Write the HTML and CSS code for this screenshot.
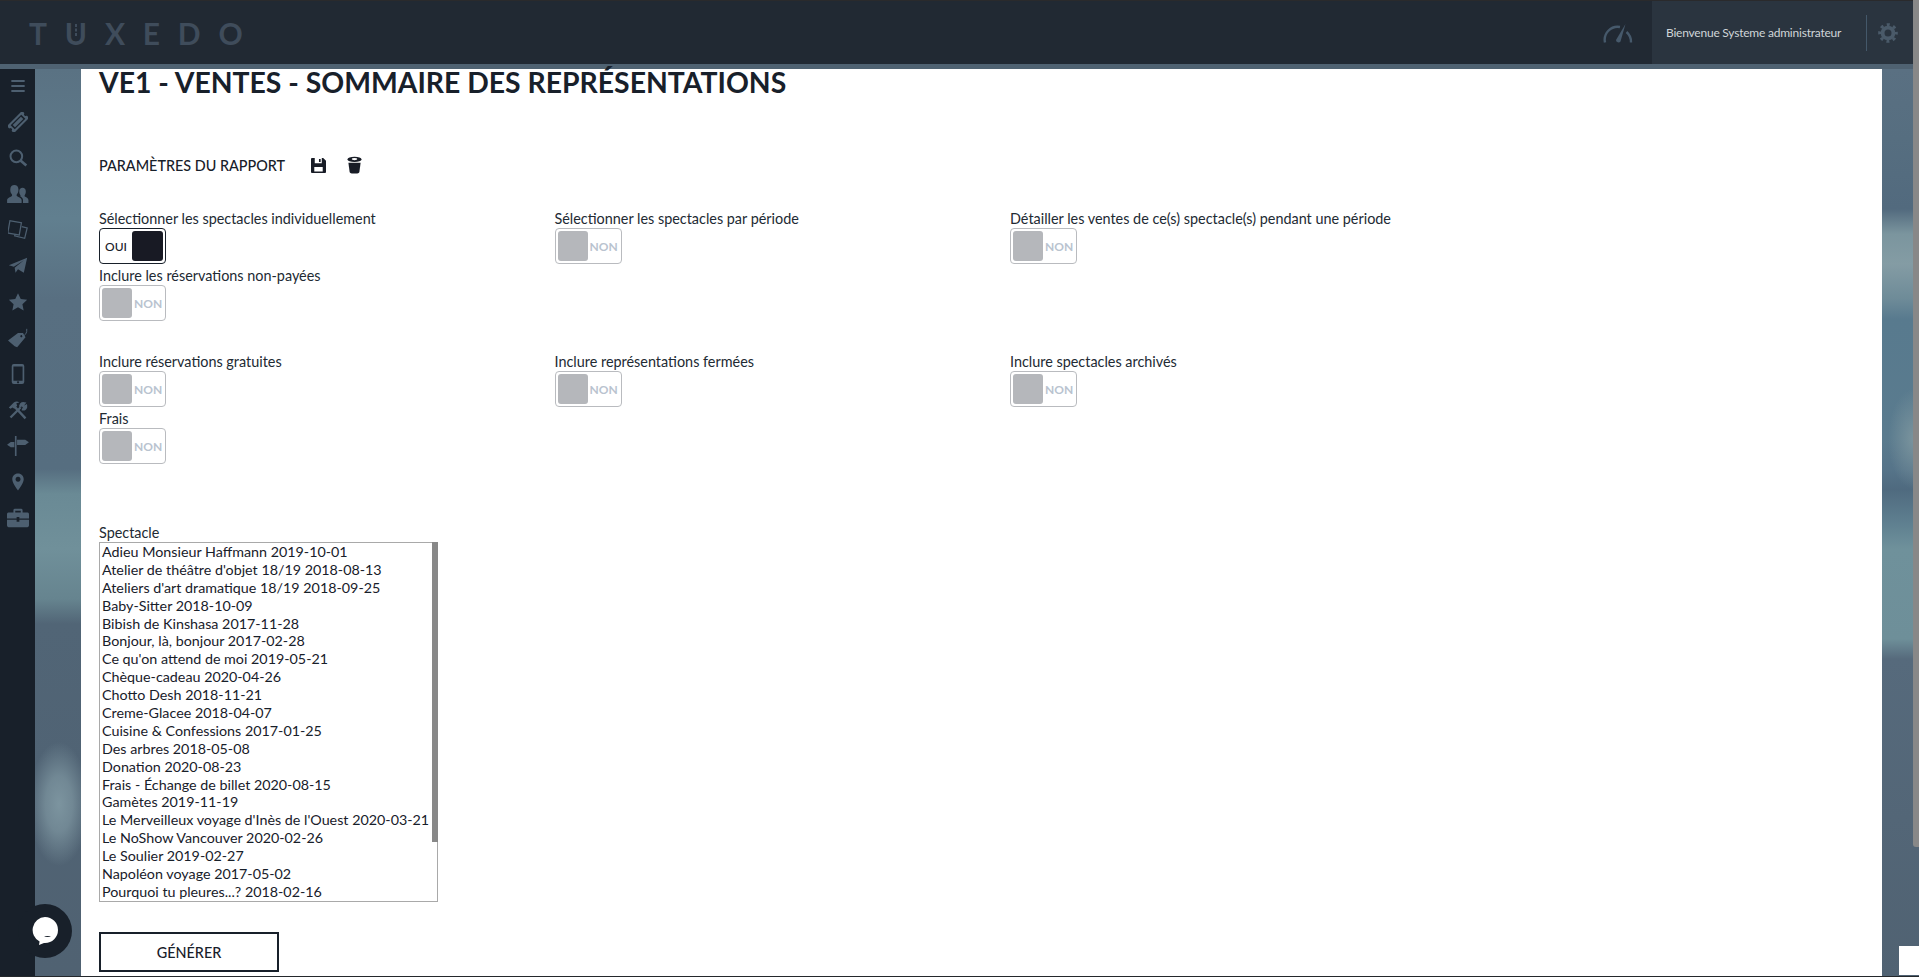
FILE: index.html
```html
<!DOCTYPE html>
<html lang="fr">
<head>
<meta charset="utf-8">
<title>Tuxedo - VE1</title>
<link rel="stylesheet" href="styles.css">
</head>
<body>
<div class="page">
  <header class="topbar">
    <div class="logo">T<span class="logo-u">U</span>XEDO</div>
    <div class="top-right">
      <svg class="gauge" viewBox="0 0 30 20" width="30" height="20"><path d="M2 19.500A13 13 0 0 1 17 4" fill="none" stroke="currentColor" stroke-width="2.400"/><path d="M23.500 9A13 13 0 0 1 28 19.500" fill="none" stroke="currentColor" stroke-width="2.400"/><path d="M22.500 1 L17.500 18.500 A2.500 2.500 0 0 1 13 17 Z" fill="currentColor"/></svg>
      <div class="welcome">
        <span class="welcome-text">Bienvenue Systeme administrateur</span>
        <span class="welcome-sep"></span>
        <svg class="gear" viewBox="0 0 24 24" width="20" height="20"><circle cx="12" cy="12" r="6.500" fill="none" stroke="currentColor" stroke-width="4.600"/><circle cx="12" cy="12" r="10" fill="none" stroke="currentColor" stroke-width="3.600" stroke-dasharray="3.600 4.250" stroke-dashoffset="1.800"/></svg>
      </div>
    </div>
  </header>
  <div class="strip"></div>
  <div class="main">
    <nav class="sidebar">
      <svg class="nav-icon" viewBox="0 0 24 24"><path d="M4 6h16M4 12h16M4 18h16" stroke="currentColor" stroke-width="2.200" fill="none"/></svg>
      <svg class="nav-icon" viewBox="0 0 24 24"><g transform="rotate(-45 12 12)"><path fill-rule="evenodd" fill="currentColor" d="M-1 6h26v4a2 2 0 0 0 0 4v4H-1v-4a2 2 0 0 0 0-4zM3 8.500v7h18v-7z"/><rect x="5" y="10" width="14" height="4" fill="currentColor"/></g></svg>
      <svg class="nav-icon" viewBox="0 0 24 24"><circle cx="10" cy="10" r="7" fill="none" stroke="currentColor" stroke-width="2.400"/><path d="M15 15l7 6" stroke="currentColor" stroke-width="3.200"/></svg>
      <svg class="nav-icon nav-wide" viewBox="0 0 24 22"><path fill="currentColor" d="M0 21v-3c0-2.500 3.500-3.500 5-4.500.8-.6.6-1.600 0-2.400C3.800 9.600 3.500 8 3.500 6 3.500 2.500 5.500 1 8 1s4.500 1.500 4.500 5c0 2-.3 3.600-1.500 5.100-.6.800-.8 1.800 0 2.400 1.500 1 5 2 5 4.500v3z"/><path fill="currentColor" d="M17.500 21v-3.500c0-1.800-1.500-3-3-3.800.5-.4.500-1 0-1.700-.9-1.100-1.100-2.500-1.100-4 0-2.700 1.500-4 3.600-4s3.600 1.300 3.600 4c0 1.500-.2 2.900-1.100 4-.5.700-.5 1.300 0 1.700 1.200.8 4 1.600 4 3.800V21z"/></svg>
      <svg class="nav-icon" viewBox="0 0 24 24"><rect x="1" y="2" width="14" height="15" transform="rotate(10 8 9)" fill="none" stroke="currentColor" stroke-width="1.500"/><path d="M16.500 8l6.500 1.500-3 12.500L8 19l.7-2" fill="none" stroke="currentColor" stroke-width="1.500"/></svg>
      <svg class="nav-icon" viewBox="0 0 24 24"><path fill="currentColor" d="M1 11L23 2l-4 18-7-4-3 4-1-6 11-9-12 8z"/></svg>
      <svg class="nav-icon" viewBox="0 0 24 24"><path fill="currentColor" d="M12 1.500l3.300 7 7.700.9-5.700 5.200 1.500 7.600L12 18.400l-6.800 3.800 1.500-7.600L1 9.400l7.700-.9z"/></svg>
      <svg class="nav-icon" viewBox="0 0 24 24"><path fill="currentColor" d="M0 15L12 6l6 0 3 5-10 12-3-1z M16 8.500a1.300 1.300 0 1 0 .1 0z" fill-rule="evenodd"/><path d="M17 9.500C21 9 23 6 22.500 1" fill="none" stroke="currentColor" stroke-width="1.200"/></svg>
      <svg class="nav-icon" viewBox="0 0 24 24"><path fill="currentColor" fill-rule="evenodd" d="M7 0h10a2.500 2.500 0 0 1 2.500 2.500v19A2.500 2.500 0 0 1 17 24H7a2.500 2.500 0 0 1-2.500-2.500v-19A2.500 2.500 0 0 1 7 0zM6.500 3v17h11V3zM12 20.800a1.200 1.200 0 1 0 .1 0z"/></svg>
      <svg class="nav-icon" viewBox="0 0 24 24"><path d="M7 7l14 15" stroke="currentColor" stroke-width="2.800"/><path fill="currentColor" d="M1 9l6-6c2-1.500 5-1.500 6.500 0l-3.500 1 1 3-3.500 3.500-2-1.500L3 10.500z"/><path d="M3 21l12-12" stroke="currentColor" stroke-width="2.800"/><path fill="none" stroke="currentColor" stroke-width="2.800" d="M15 9c-1-3 1-5.500 4.500-5l-2 2.500 1.500 2 2.700-1.500c.5 3-2 5-5 4"/></svg>
      <svg class="nav-icon nav-wide" viewBox="0 0 24 22"><path d="M9.500 0v22" stroke="currentColor" stroke-width="1.800"/><path fill="currentColor" d="M11 4h9l4 3-4 3h-9z"/><path fill="currentColor" d="M8 6.500H4l-4 3 4 3h4z"/></svg>
      <svg class="nav-icon" viewBox="-2 -2 28 28"><path fill="currentColor" fill-rule="evenodd" d="M12 0c4.800 0 8 3.500 8 8 0 5-5 11-8 16-3-5-8-11-8-16 0-4.500 3.200-8 8-8zm0 4.500a3.500 3.500 0 1 0 .1 0z"/></svg>
      <svg class="nav-icon nav-wide" viewBox="0 2 24 20"><path fill="currentColor" fill-rule="evenodd" d="M1.500 6H7V3.500C7 2.500 8 2 9 2h6c1 0 2 .5 2 1.500V6h5.500C23.500 6 24 7 24 8v4.500H13.500V11h-3v1.500H0V8c0-1 .5-2 1.500-2zM9 6h6V4H9z"/><path fill="currentColor" d="M0 14h10.500v2h3v-2H24v6c0 1-.7 2-1.800 2H1.800C.7 22 0 21 0 20z"/></svg>
    </nav>
    <div class="gutter"></div>
    <main class="content">
      <h1 class="title">VE1 - VENTES - SOMMAIRE DES REPRÉSENTATIONS</h1>
      <div class="params">
        <span class="params-title">PARAMÈTRES DU RAPPORT</span>
        <svg class="param-icon" viewBox="0 0 16 16" width="15" height="15"><path fill="#181c26" fill-rule="evenodd" d="M1 0h12l3 3v12a1 1 0 0 1-1 1H1a1 1 0 0 1-1-1V1a1 1 0 0 1 1-1zM4 0v5.500h7.500V0zM8.500 1h1.800v3.300H8.500zM3.500 9.500v4.800h9V9.500z"/></svg>
        <svg class="param-icon" viewBox="0 0 16 18" width="15" height="18"><ellipse cx="8" cy="3" rx="7.500" ry="2.700" fill="#181c26"/><ellipse cx="8" cy="2.700" rx="3" ry="1.100" fill="#fff"/><path fill="#181c26" d="M1.500 6.500h13l-1.300 10c-.2 1-1.200 1.500-2.200 1.500H5c-1 0-2-.5-2.200-1.500z"/></svg>
      </div>
      <div class="field-grid field-grid-first">
        <div class="field"><label class="field-label">Sélectionner les spectacles individuellement</label><div class="toggle toggle-on"><span class="toggle-text">OUI</span><span class="knob"></span></div></div>
        <div class="field"><label class="field-label">Sélectionner les spectacles par période</label><div class="toggle"><span class="knob"></span><span class="toggle-text">NON</span></div></div>
        <div class="field"><label class="field-label">Détailler les ventes de ce(s) spectacle(s) pendant une période</label><div class="toggle"><span class="knob"></span><span class="toggle-text">NON</span></div></div>
      </div>
      <div class="field-grid">
        <div class="field"><label class="field-label">Inclure les réservations non-payées</label><div class="toggle"><span class="knob"></span><span class="toggle-text">NON</span></div></div>
      </div>
      <div class="field-grid field-grid-gap">
        <div class="field"><label class="field-label">Inclure réservations gratuites</label><div class="toggle"><span class="knob"></span><span class="toggle-text">NON</span></div></div>
        <div class="field"><label class="field-label">Inclure représentations fermées</label><div class="toggle"><span class="knob"></span><span class="toggle-text">NON</span></div></div>
        <div class="field"><label class="field-label">Inclure spectacles archivés</label><div class="toggle"><span class="knob"></span><span class="toggle-text">NON</span></div></div>
      </div>
      <div class="field-grid">
        <div class="field"><label class="field-label">Frais</label><div class="toggle"><span class="knob"></span><span class="toggle-text">NON</span></div></div>
      </div>
      <div class="select-field">
        <label class="field-label" for="shows">Spectacle</label>
        <div class="show-list-wrap">
          <select id="shows" class="show-list" multiple>
            <option>Adieu Monsieur Haffmann 2019-10-01</option>
            <option>Atelier de théâtre d'objet 18/19 2018-08-13</option>
            <option>Ateliers d'art dramatique 18/19 2018-09-25</option>
            <option>Baby-Sitter 2018-10-09</option>
            <option>Bibish de Kinshasa 2017-11-28</option>
            <option>Bonjour, là, bonjour 2017-02-28</option>
            <option>Ce qu'on attend de moi 2019-05-21</option>
            <option>Chèque-cadeau 2020-04-26</option>
            <option>Chotto Desh 2018-11-21</option>
            <option>Creme-Glacee 2018-04-07</option>
            <option>Cuisine &amp; Confessions 2017-01-25</option>
            <option>Des arbres 2018-05-08</option>
            <option>Donation 2020-08-23</option>
            <option>Frais - Échange de billet 2020-08-15</option>
            <option>Gamètes 2019-11-19</option>
            <option>Le Merveilleux voyage d'Inès de l'Ouest 2020-03-21</option>
            <option>Le NoShow Vancouver 2020-02-26</option>
            <option>Le Soulier 2019-02-27</option>
            <option>Napoléon voyage 2017-05-02</option>
            <option>Pourquoi tu pleures...? 2018-02-16</option>
          </select>
        </div>
      </div>
      <button class="generate" type="button">GÉNÉRER</button>
    </main>
    <div class="gutter-right"></div>
  </div>
  <div class="chat">
    <svg viewBox="0 0 28 30" width="28" height="30"><path fill="#fff" d="M14 1a13 13 0 0 1 0 26h-1l-5 2 .6-3.500A13 13 0 0 1 14 1z"/><path d="M13 20c2 1.400 5 1.400 7 0z" fill="#18202a"/></svg>
  </div>
  <div class="bottom-line"></div>
  <div class="page-scrollbar"></div>
  <div class="corner-box"></div>
</div>
</body>
</html>
```

FILE: styles.css
```css
* { box-sizing: border-box; }
html, body { margin: 0; height: 100%; overflow: hidden; }
body { font-family: Lato, "Liberation Sans", sans-serif; color: #18202a; font-size: 14.4px; }

.page {
  position: relative;
  width: 1919px;
  height: 977px;
  display: flex;
  flex-direction: column;
  overflow: hidden;
  background: #506272;
}

.topbar {
  height: 64px;
  flex: none;
  display: flex;
  justify-content: space-between;
  background: #212933;
  border-top: 1px solid #2a2a2c;
  padding-right: 6px;
}
.logo {
  padding: 14px 0 0 29px;
  font-size: 30px;
  line-height: 36px;
  font-weight: 700;
  letter-spacing: 17.8px;
  color: #3f4c5b;
}
.logo-u { position: relative; display: inline-block; }
.logo-u::after {
  content: "";
  position: absolute;
  left: 10px;
  top: 9px;
  width: 2.500px;
  height: 2.500px;
  background: #3f4c5b;
  box-shadow: 0 4.500px #3f4c5b, 0 9px #3f4c5b;
}
.top-right { display: flex; align-items: stretch; }
.gauge { color: #46596b; align-self: center; margin-right: 19px; }
.welcome {
  width: 261px;
  display: flex;
  align-items: center;
  padding-left: 14px;
  background: #2a343f;
}
.welcome-text {
  font-size: 12px;
  color: #cfd4d8;
  letter-spacing: -.22px;
  white-space: nowrap;
  width: 200px;
}
.welcome-sep { width: 1px; height: 36px; background: #44586a; flex: none; }
.gear { color: #4a5a69; margin-left: 11px; flex: none; }

.strip { height: 5px; flex: none; background: #4f6272; }

.main { flex: 1; min-height: 0; display: flex; }
.sidebar {
  width: 35px;
  flex: none;
  background: #18202a;
  display: flex;
  flex-direction: column;
  align-items: center;
}
.nav-icon {
  width: 20px;
  height: 20px;
  margin: 8px 0;
  flex: none;
  color: #4d5f70;
}
.nav-icon:first-child { margin-top: 7px; }
.nav-wide { width: 22px; }
.gutter {
  width: 46px;
  flex: none;
  background:
    radial-gradient(ellipse 30px 62px at 24px 735px, #7c949f 0%, rgba(124,148,159,.75) 45%, rgba(124,148,159,0) 100%),
    linear-gradient(#5a7283 0, #617f8f 150px, #586f81 230px, #566e80 400px, #6a8a95 425px, #70909a 480px, #66848f 530px, #516576 555px, #506374 700px, #506272 908px);
}
.chat {
  position: absolute;
  left: 18px;
  top: 904px;
  width: 54px;
  height: 54px;
  border-radius: 50%;
  background: #18202a;
  display: flex;
  align-items: center;
  justify-content: center;
}
.content {
  width: 1801px;
  flex: none;
  background: #fff;
  padding-left: 18px;
}
.gutter-right {
  flex: 1;
  background:
    radial-gradient(ellipse 26px 50px at 32px 370px, rgba(128,152,160,.85) 0%, rgba(128,152,160,0) 100%),
    linear-gradient(#5a7082 0, #566e80 70px, #526a7e 140px, #7b959e 165px, #849ca4 195px, #6e8b98 230px, #587a8e 250px, #5a7b8e 370px, #567489 400px, #4f6a7f 420px, #5f8090 455px, #6f919b 480px, #6e8f99 570px, #566a7c 590px, #506272 908px);
}

.title {
  margin: -4px 0 0;
  font-size: 28.35px;
  line-height: 34px;
  font-weight: 700;
  color: #18202a;
}
.params {
  display: flex;
  align-items: center;
  margin-top: 54px;
  height: 24px;
}
.params-title { font-size: 14.4px; font-weight: 500; width: 212px; }
.param-icon { margin-right: 21px; }

.field-grid { display: grid; grid-template-columns: repeat(3, 455.5px); }
.field-grid-first { margin-top: 33px; }
.field-grid-gap { margin-top: 29px; }
.field-label { display: block; font-size: 14.4px; line-height: 17px; height: 18px; color: #222a33; }
.field { padding-bottom: 3px; }

.toggle {
  width: 67px;
  height: 36px;
  border: 1px solid #b9bbbf;
  border-radius: 4px;
  padding: 2px;
  display: flex;
  align-items: center;
  gap: 2px;
  font-size: 12px;
  font-weight: 700;
  color: #b9c3cf;
}
.toggle .knob { width: 30px; height: 30px; border-radius: 3px; background: #b5b7bb; flex: none; }
.toggle-on {
  justify-content: space-between;
  border-color: #18202a;
  color: #18202a;
  padding-left: 5px;
}
.toggle-on .knob { background: #181a24; width: 31px; }
.toggle-on .toggle-text { font-weight: 500; }

.select-field { margin-top: 57px; }
.show-list-wrap { position: relative; width: 339px; height: 360px; }
.show-list-wrap::after {
  content: "";
  position: absolute;
  right: 0;
  top: 0;
  width: 6px;
  height: 300px;
  background: #888;
}
.show-list {
  display: block;
  width: 339px;
  height: 360px;
  padding: 0;
  border: 1px solid #a9a9a9;
  border-radius: 0;
  background: #fff;
  font-family: Lato, "Liberation Sans", sans-serif;
  font-size: 14.3px;
  color: #18202a;
  outline: none;
  overflow: hidden;
}
.show-list option { padding: 0 2px; min-height: 17.9px; line-height: 17.9px; height: 17.9px; }

.generate {
  display: block;
  margin-top: 30px;
  width: 180px;
  height: 40px;
  border: 2px solid #18202a;
  background: #fff;
  font-family: Lato, "Liberation Sans", sans-serif;
  font-size: 14.4px;
  font-weight: 500;
  color: #18202a;
}

.bottom-line { position: absolute; left: 0; right: 0; bottom: 0; height: 1.500px; background: #24282c; }
.page-scrollbar {
  position: absolute;
  right: 0;
  top: 0;
  width: 6px;
  height: 847px;
  background: #888;
  border-radius: 0 0 0 3px;
}
.corner-box { position: absolute; left: 1899px; top: 946px; width: 20px; height: 29px; background: #fff; }
```
